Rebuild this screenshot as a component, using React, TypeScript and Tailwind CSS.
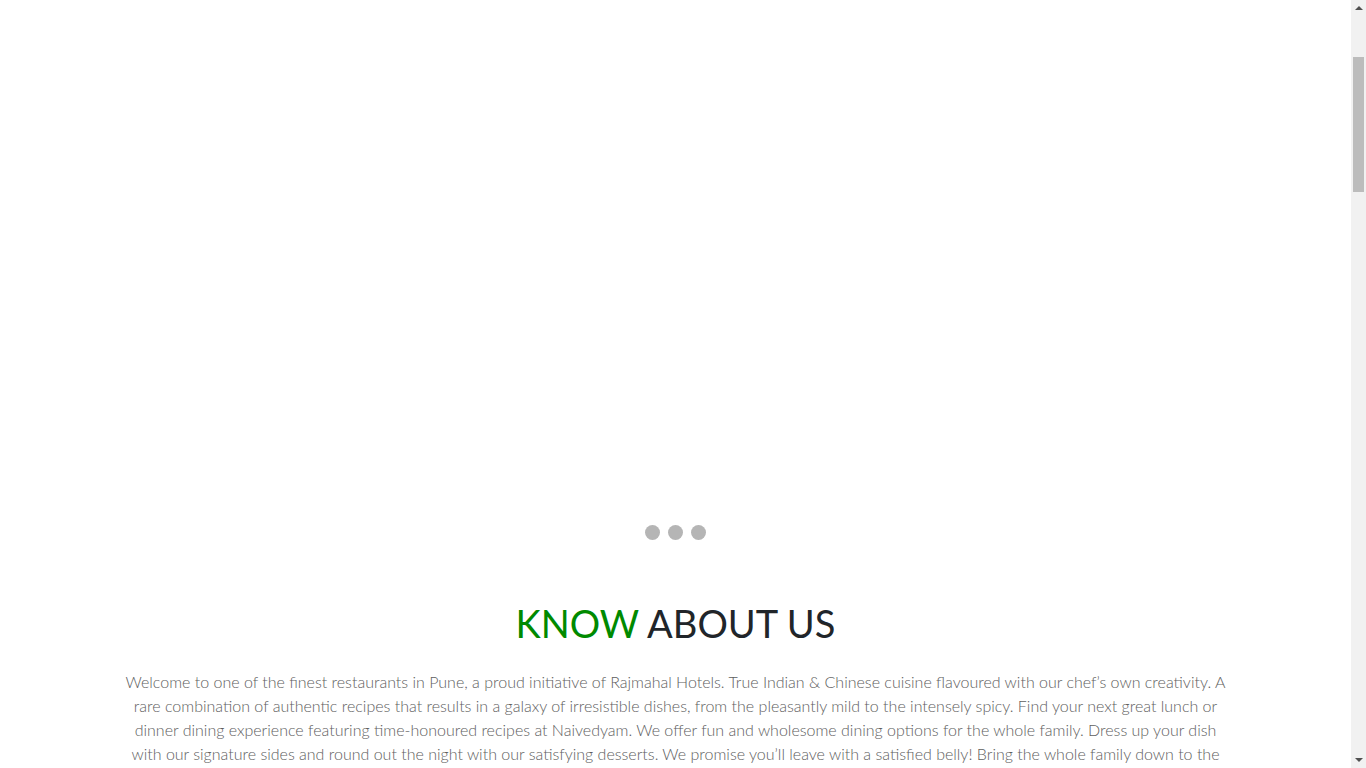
export default function App() {
  const dots = [0, 1, 2];

  return (
    <div className="flex min-h-[4200px] bg-white font-['Lato','Open_Sans',sans-serif]">
      <main className="min-w-0 flex-1">
        {/* slider, images not loaded */}
        <section className="relative h-[510px] w-full">
          <div className="absolute bottom-[-30px] left-0 right-0 flex justify-center gap-2">
            {dots.map((d) => (
              <span key={d} className="h-[15px] w-[15px] rounded-full bg-[#b5b5b5]" />
            ))}
          </div>
        </section>

        <section className="mx-auto max-w-[1140px] px-[15px] pt-[89px] text-center">
          <h2 className="text-[38px] leading-[48px] font-normal text-[#212529]">
            <span className="text-[#008a00]">KNOW</span> ABOUT US
          </h2>
          <p className="mt-[23px] text-[16px] leading-6 font-light text-[#5e5e5e]">
            Welcome to one of the finest restaurants in Pune, a proud initiative of Rajmahal Hotels. True Indian &amp;
            Chinese cuisine flavoured with our chef&rsquo;s own creativity. A rare combination of authentic recipes that
            results in a galaxy of irresistible dishes, from the pleasantly mild to the intensely spicy. Find your next
            great lunch or dinner dining experience featuring time-honoured recipes at Naivedyam. We offer fun and
            wholesome dining options for the whole family. Dress up your dish with our signature sides and round out the
            night with our satisfying desserts. We promise you&rsquo;ll leave with a satisfied belly! Bring the whole
            family down to the Naivedyam for a meal to remember.
          </p>
        </section>
      </main>

      {/* window scrollbar as it shows in the screenshot */}
      <aside className="w-[15px] shrink-0">
        <div className="sticky top-0 flex h-screen flex-col items-center bg-[#f1f1f1]">
          <span className="mt-[6px] h-0 w-0 border-x-[4px] border-b-[4px] border-x-transparent border-b-[#505050]" />
          <div className="mt-[47px] h-[135px] w-[11px] bg-[#bcbcbc]" />
          <span className="mt-auto mb-[6px] h-0 w-0 border-x-[4px] border-t-[4px] border-x-transparent border-t-[#505050]" />
        </div>
      </aside>
    </div>
  );
}
